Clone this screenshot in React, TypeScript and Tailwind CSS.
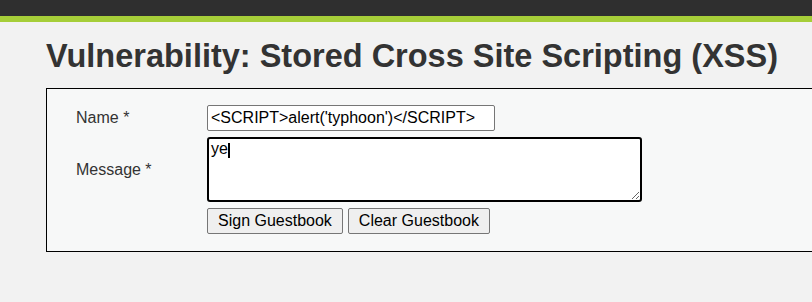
import React from "react";

const App = () => {
  return (
    <div
      className="w-[812px] h-[302px] overflow-hidden bg-[#f2f2f2]"
      style={{ fontFamily: '"Liberation Sans", Arial, sans-serif' }}
    >
      <div className="h-[16px] bg-[#2f2f2f]" />
      <div className="h-[6px] bg-[#a6ce39]" />

      <div className="pl-[46px]">
        <h1 className="mt-[16px] text-[32.5px] leading-[36px] font-bold text-[#333333] whitespace-nowrap">
          Vulnerability: Stored Cross Site Scripting (XSS)
        </h1>

        <div className="mt-[14px] w-[900px] border border-black bg-[#f7f8f8] pl-[29px] pt-[16px] pb-[17px]">
          <form
            className="grid grid-cols-[131px_1fr] items-center gap-y-[6px] text-[16px] text-[#333333]"
            onSubmit={(e) => e.preventDefault()}
          >
            <label>Name *</label>
            <div>
              <input
                type="text"
                defaultValue="<SCRIPT>alert('typhoon')</SCRIPT>"
                className="w-[288px] h-[26px] border border-[#767676] rounded-[2px] bg-white px-[3px] text-[16px] text-black outline-none"
              />
            </div>

            <label>Message *</label>
            <div className="relative w-[435px]">
              <textarea
                defaultValue="ye"
                className="block w-[435px] h-[65px] border-2 border-black rounded-[3px] bg-white px-[2px] pt-[1px] text-[16px] leading-[18px] text-black outline-none"
              />
              <span className="absolute left-[21px] top-[6px] w-[2px] h-[15px] bg-black" />
            </div>

            <div />
            <div className="flex gap-[5px]">
              <button
                type="button"
                className="h-[26px] px-[10px] border border-[#767676] rounded-[2px] bg-[#efefef] text-[16px] text-black"
              >
                Sign Guestbook
              </button>
              <button
                type="button"
                className="h-[26px] px-[10px] border border-[#767676] rounded-[2px] bg-[#efefef] text-[16px] text-black"
              >
                Clear Guestbook
              </button>
            </div>
          </form>
        </div>
      </div>
    </div>
  );
};

export default App;
